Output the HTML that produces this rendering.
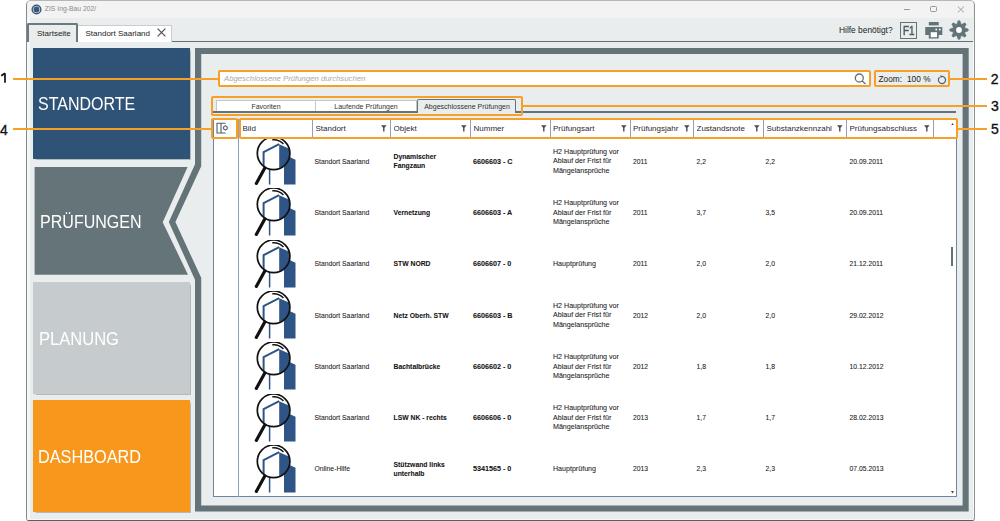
<!DOCTYPE html>
<html><head><meta charset="utf-8">
<style>
*{margin:0;padding:0;box-sizing:border-box}
html,body{width:1000px;height:521px;overflow:hidden;background:#fff;font-family:"Liberation Sans",sans-serif;color:#222}
.a{position:absolute}
#win{left:26px;top:0px;width:949px;height:521px;background:#e9eded;border:1px solid #b4b6b7;border-left-color:#838a8b;border-right-color:#8f9495;border-bottom-color:#5a6064;border-radius:5px 5px 3px 3px;overflow:hidden}
#title{left:0;top:0;width:946px;height:17px;background:#f3f3f3}
.t{white-space:nowrap;line-height:1}
.side{left:32.6px;width:157px;color:#fff;font-size:17.5px;line-height:1;box-shadow:0.6px 0.8px 0.8px rgba(0,0,0,0.22)}
.side span{position:absolute;left:6px;transform-origin:0 0;white-space:nowrap}
.hd{top:120px;height:17px;font-size:8px;color:#2a2a2a;line-height:17px;white-space:nowrap;overflow:hidden}
.sep{width:1px;background:#8ea2bd}
.flt{width:6px;height:7px}
.cell{font-size:6.8px;color:#1a1a1a;white-space:nowrap;line-height:9.5px;-webkit-text-stroke:0.07px #1a1a1a}
.n{font-size:7.2px}
.h2{font-size:7.1px;line-height:9.6px}
.b{font-weight:bold;color:#111}
.or{border:2px solid #f7a027;border-radius:2px}
.ln{background:#f7a027;height:2px}
.num{font-size:14px;color:#111;line-height:1;-webkit-text-stroke:0.35px #111}
</style></head><body>

<div id="win" class="a">
  <div id="title" class="a"></div>
  <div class="a" style="left:0;top:17px;width:2.5px;height:502px;background:#f6f8f8"></div>
  <div class="a" style="left:0;top:517.5px;width:947px;height:1.5px;background:#f6f8f8"></div>
  <div class="a" style="left:945.5px;top:41px;width:1.5px;height:476px;background:#f6f8f8"></div>
</div>

<!-- title bar content -->
<svg class="a" style="left:31px;top:4px" width="11" height="11" viewBox="0 0 11 11">
  <circle cx="5.5" cy="5.5" r="5" fill="#3b5878"/>
  <circle cx="5.5" cy="5.5" r="3.6" fill="#dfe5ea"/>
  <circle cx="5.5" cy="5.5" r="2.9" fill="#3b5878"/>
</svg>
<div class="a t" style="left:44.8px;top:6.2px;font-size:6.8px;color:#8a8a8a">ZIS Ing-Bau 202/</div>
<!-- window buttons -->
<div class="a" style="left:904px;top:9px;width:6px;height:1px;background:#999"></div>
<div class="a" style="left:930px;top:5.5px;width:7px;height:6.5px;border:1px solid #999;border-radius:1.5px"></div>
<svg class="a" style="left:957px;top:5.5px" width="8" height="7" viewBox="0 0 8 7"><path d="M0.8,0.5 L7,6.5 M7,0.5 L0.8,6.5" stroke="#999" stroke-width="0.9"/></svg>

<!-- toolbar -->
<div class="a" style="left:76px;top:40.5px;width:897px;height:1.5px;background:#637378"></div>
<!-- tabs -->
<div class="a" style="left:76px;top:24.5px;width:96px;height:17px;background:#fff;border:1px solid #c9cdcf;border-left:1.5px solid #8a9598;border-bottom:none"></div>
<div class="a t" style="left:85.5px;top:29.8px;font-size:8px;color:#222">Standort Saarland</div>
<svg class="a" style="left:156.5px;top:28px" width="9" height="9" viewBox="0 0 9 9"><path d="M0.6,0.6 L8.4,8.4 M8.4,0.6 L0.6,8.4" stroke="#555" stroke-width="1.3"/></svg>
<div class="a" style="left:27px;top:22.5px;width:50.5px;height:19.5px;background:#e9eded;border:2px solid #6b7a7e;border-bottom:none;border-radius:2px 2px 0 0"></div>
<div class="a t" style="left:37px;top:29.8px;font-size:8px;color:#222">Startseite</div>

<div class="a t" style="left:839px;top:26.3px;font-size:8.4px;color:#222">Hilfe benötigt?</div>
<div class="a" style="left:899.8px;top:22px;width:17.2px;height:17px;border:1.8px solid #637378"></div>
<div class="a t" style="left:902.6px;top:24.6px;font-size:12px;color:#4f5d62;transform:scaleX(0.82);transform-origin:0 0;-webkit-text-stroke:0.5px #4f5d62">F1</div>
<!-- printer -->
<svg class="a" style="left:924px;top:21px" width="20" height="19" viewBox="0 0 20 19">
  <rect x="4.8" y="1" width="9.9" height="3.4" fill="#637378"/>
  <rect x="1.2" y="6" width="17.1" height="8" rx="0.5" fill="#637378"/>
  <rect x="4.8" y="10.4" width="9.9" height="7.1" fill="#637378"/>
  <rect x="6.7" y="11.2" width="6.3" height="5" fill="#fff"/>
  <circle cx="12.2" cy="8.5" r="0.9" fill="#fff"/>
  <circle cx="15.8" cy="8.5" r="0.9" fill="#fff"/>
</svg>
<!-- gear -->
<svg class="a" style="left:949px;top:20px" width="20" height="20" viewBox="-10 -10 20 20">
  <path d="M-1.95,-6.20 L-1.00,-9.20 L1.00,-9.20 L1.95,-6.20 L2.42,-5.84 L3.01,-5.76 L5.80,-7.21 L7.21,-5.80 L5.76,-3.01 L5.84,-2.42 L6.20,-1.95 L9.20,-1.00 L9.20,1.00 L6.20,1.95 L5.84,2.42 L5.76,3.01 L7.21,5.80 L5.80,7.21 L3.01,5.76 L2.42,5.84 L1.95,6.20 L1.00,9.20 L-1.00,9.20 L-1.95,6.20 L-2.42,5.84 L-3.01,5.76 L-5.80,7.21 L-7.21,5.80 L-5.76,3.01 L-5.84,2.42 L-6.20,1.95 L-9.20,1.00 L-9.20,-1.00 L-6.20,-1.95 L-5.84,-2.42 L-5.76,-3.01 L-7.21,-5.80 L-5.80,-7.21 L-3.01,-5.76 L-2.42,-5.84 Z" fill="#637378" stroke="#637378" stroke-width="0.5" stroke-linejoin="round"/>
  <circle r="2.9" fill="#fff"/>
</svg>

<!-- sidebar -->
<div class="a side" style="top:48px;height:111px;background:#2f5277"><span style="left:5.6px;top:47.8px;transform:scaleX(0.915)">STANDORTE</span></div>
<svg class="a" style="left:33px;top:167px" width="160" height="108" viewBox="0 0 160 108">
  <polygon points="1.6,0 154.6,0 129.7,55.2 155,107.7 1.6,107.7" fill="#657479"/>
</svg>
<div class="a side" style="top:167px;height:108px;background:transparent;box-shadow:none"><span style="left:7.4px;top:46.5px;transform:scaleX(0.917)">PRÜFUNGEN</span></div>
<div class="a side" style="top:282px;height:112px;background:#c6cccd"><span style="left:6.4px;top:48.8px;transform:scaleX(0.945)">PLANUNG</span></div>
<div class="a side" style="top:400px;height:112px;background:#f7981d"><span style="left:5.9px;top:48.5px;transform:scaleX(0.93)">DASHBOARD</span></div>

<!-- dark frame -->
<svg class="a" style="left:0;top:0" width="1000" height="521">
  <path fill-rule="evenodd" fill="#637378" d="M195,48 V164.3 L168.8,222 L195,279.7 V511.5 H968.7 V48 Z M201.2,54 V166.2 L175.4,222 L201.2,277.8 V505.5 H962.6 V54 Z"/>
</svg>

<!-- search -->
<div class="a" style="left:219px;top:71.5px;width:651px;height:14.5px;background:#fff"></div>
<div class="a t" style="left:224px;top:75px;font-size:7.75px;font-style:italic;color:#a9a9a9">Abgeschlossene Prüfungen durchsuchen</div>
<svg class="a" style="left:854px;top:73px" width="13" height="12" viewBox="0 0 13 12"><circle cx="5.3" cy="5" r="4" fill="none" stroke="#637378" stroke-width="1.3"/><path d="M8.2,8 L11.5,11" stroke="#637378" stroke-width="1.4"/></svg>
<div class="a t" style="left:878.5px;top:75.2px;font-size:8.3px;color:#222">Zoom:</div><div class="a t" style="left:907px;top:75.2px;font-size:8.3px;color:#222">100 %</div>
<svg class="a" style="left:936px;top:74px" width="11" height="11" viewBox="0 0 11 11"><path d="M3.6,3.3 A3.6,3.6 0 1 0 5.9,2.4" fill="none" stroke="#55656a" stroke-width="1.25"/><path d="M4.4,0.9 L7,2.4 L4.6,4.1 Z" fill="#55656a"/></svg>

<!-- tabs 3 -->
<div class="a" style="left:213px;top:111.2px;width:743px;height:1.6px;background:#637378"></div>
<div class="a" style="left:216px;top:100px;width:100px;height:11.2px;background:#fff;border:1px solid #c3c7c9;border-bottom:none"></div>
<div class="a t" style="left:216px;top:102.5px;width:100px;text-align:center;font-size:7px;color:#333">Favoriten</div>
<div class="a" style="left:315px;top:100px;width:102px;height:11.2px;background:#fff;border:1px solid #c3c7c9;border-bottom:none"></div>
<div class="a t" style="left:315px;top:102.5px;width:102px;text-align:center;font-size:7px;color:#333">Laufende Prüfungen</div>
<div class="a" style="left:416.8px;top:99px;width:99.5px;height:14px;background:#e9eded;border:1.8px solid #637378;border-bottom:none;border-radius:2px 2px 0 0"></div>
<div class="a t" style="left:417px;top:102.5px;width:100px;text-align:center;font-size:7px;color:#333">Abgeschlossene Prüfungen</div>

<!-- table -->
<div class="a" style="left:213px;top:119px;width:744px;height:378px;background:#fff;border:1px solid #6f86a3"></div>
<div class="a" style="left:213px;top:136.5px;width:744px;height:1px;background:#8ea2bd"></div>
<div class="a sep" style="left:238px;top:119px;height:378px"></div>

<div class="a hd" style="left:242.5px;width:69px">Bild</div>
<div class="a sep" style="left:312px;top:120px;height:16.5px"></div>
<div class="a hd" style="left:315.5px;width:62px">Standort</div>
<svg class="a" style="left:381px;top:124.5px" width="6" height="7" viewBox="0 0 6 7"><path d="M0,0.3 H5.6 L3.5,2.8 V6.6 H2.1 V2.8 Z" fill="#4a4a4a"/></svg>
<div class="a sep" style="left:390px;top:120px;height:16.5px"></div>
<div class="a hd" style="left:393.5px;width:64px">Objekt</div>
<svg class="a" style="left:461px;top:124.5px" width="6" height="7" viewBox="0 0 6 7"><path d="M0,0.3 H5.6 L3.5,2.8 V6.6 H2.1 V2.8 Z" fill="#4a4a4a"/></svg>
<div class="a sep" style="left:470px;top:120px;height:16.5px"></div>
<div class="a hd" style="left:473.5px;width:63.5px">Nummer</div>
<svg class="a" style="left:540.5px;top:124.5px" width="6" height="7" viewBox="0 0 6 7"><path d="M0,0.3 H5.6 L3.5,2.8 V6.6 H2.1 V2.8 Z" fill="#4a4a4a"/></svg>
<div class="a sep" style="left:549.5px;top:120px;height:16.5px"></div>
<div class="a hd" style="left:553.0px;width:64.0px">Prüfungsart</div>
<svg class="a" style="left:620.5px;top:124.5px" width="6" height="7" viewBox="0 0 6 7"><path d="M0,0.3 H5.6 L3.5,2.8 V6.6 H2.1 V2.8 Z" fill="#4a4a4a"/></svg>
<div class="a sep" style="left:629.5px;top:120px;height:16.5px"></div>
<div class="a hd" style="left:633.0px;width:46.0px">Prüfungsjahr</div>
<svg class="a" style="left:684px;top:124.5px" width="6" height="7" viewBox="0 0 6 7"><path d="M0,0.3 H5.6 L3.5,2.8 V6.6 H2.1 V2.8 Z" fill="#4a4a4a"/></svg>
<div class="a sep" style="left:693px;top:120px;height:16.5px"></div>
<div class="a hd" style="left:696.5px;width:54px">Zustandsnote</div>
<svg class="a" style="left:754px;top:124.5px" width="6" height="7" viewBox="0 0 6 7"><path d="M0,0.3 H5.6 L3.5,2.8 V6.6 H2.1 V2.8 Z" fill="#4a4a4a"/></svg>
<div class="a sep" style="left:763px;top:120px;height:16.5px"></div>
<div class="a hd" style="left:766.5px;width:67px">Substanzkennzahl</div>
<svg class="a" style="left:837px;top:124.5px" width="6" height="7" viewBox="0 0 6 7"><path d="M0,0.3 H5.6 L3.5,2.8 V6.6 H2.1 V2.8 Z" fill="#4a4a4a"/></svg>
<div class="a sep" style="left:846px;top:120px;height:16.5px"></div>
<div class="a hd" style="left:849.5px;width:70.5px">Prüfungsabschluss</div>
<svg class="a" style="left:923.5px;top:124.5px" width="6" height="7" viewBox="0 0 6 7"><path d="M0,0.3 H5.6 L3.5,2.8 V6.6 H2.1 V2.8 Z" fill="#4a4a4a"/></svg>
<div class="a sep" style="left:932.5px;top:120px;height:16.5px"></div>
<svg class="a" style="left:216px;top:121.5px" width="13" height="12" viewBox="0 0 13 12"><path d="M1,0.8 V11.4 M0.5,1.2 H9.6 M0.5,11 H9.6 M5,1.2 V11" stroke="#4f5e64" stroke-width="1.1" fill="none"/><circle cx="9.4" cy="5.9" r="1.9" fill="#fff" stroke="#4f5e64" stroke-width="1.1"/><path d="M9.4,3.2 V3.9 M9.4,7.9 V8.6 M6.7,5.9 H7.4 M11.4,5.9 H12.1" stroke="#4f5e64" stroke-width="0.9"/></svg>
<svg class="a" style="left:950.8px;top:122.6px" width="3" height="2.4" viewBox="0 0 3 2.4"><path d="M0,2.4 L1.5,0 L3,2.4Z" fill="#444"/></svg>
<svg class="a" style="left:950.8px;top:491.2px" width="3" height="2.4" viewBox="0 0 3 2.4"><path d="M0,0 L1.5,2.4 L3,0Z" fill="#444"/></svg>
<div class="a" style="left:951px;top:247px;width:2px;height:19px;background:#637378"></div>
<svg width="0" height="0" style="position:absolute"><defs>
<clipPath id="lens"><circle cx="23.6" cy="16.3" r="16"/></clipPath>
<mask id="nolens"><rect x="-5" y="-5" width="60" height="60" fill="#fff"/><circle cx="23.6" cy="16.3" r="16.4" fill="#000"/></mask>
<symbol id="ico" viewBox="0 0 50 50" overflow="visible">
<g mask="url(#nolens)">
 <polygon points="34,17.5 45.5,22.7 45.5,47.4 34,47.4" fill="#2e5585"/>
 <path d="M19.6,47.4 V24 L34,17.5" fill="none" stroke="#2e5585" stroke-width="1.5"/>
</g>
<g clip-path="url(#lens)">
 <polygon points="29.2,7.2 46,14.8 46,40 29.2,40" fill="#2e5585"/>
 <path d="M13.6,40 V15.2 L29.2,7.2" fill="none" stroke="#2e5585" stroke-width="2"/>
</g>
<circle cx="23.6" cy="16.3" r="16.3" fill="none" stroke="#111" stroke-width="1.7"/>
<path d="M22.19,2.87 A13.5,13.5 0 0 1 33.47,7.09" fill="none" stroke="#111" stroke-width="1.4"/>
<path d="M14.8,31 L6.3,46.4" stroke="#111" stroke-width="3.2" stroke-linecap="round"/>
</symbol></defs></svg>
<svg class="a" style="left:250px;top:137.00px" width="50" height="50"><use href="#ico"/></svg>
<div class="a cell" style="left:314.5px;top:156.65px">Standort Saarland</div>
<div class="a cell b" style="left:393.5px;top:151.90px">Dynamischer<br>Fangzaun</div>
<div class="a cell b n" style="left:473px;top:156.65px">6606603 - C</div>
<div class="a cell h2" style="left:553px;top:147.80px">H2 Hauptprüfung vor<br>Ablauf der Frist für<br>Mängelansprüche</div>
<div class="a cell" style="left:633px;top:156.65px">2011</div>
<div class="a cell" style="left:696.5px;top:156.65px">2,2</div>
<div class="a cell" style="left:765.5px;top:156.65px">2,2</div>
<div class="a cell" style="left:849.5px;top:156.65px">20.09.2011</div>
<svg class="a" style="left:250px;top:188.30px" width="50" height="50"><use href="#ico"/></svg>
<div class="a cell" style="left:314.5px;top:207.95px">Standort Saarland</div>
<div class="a cell b" style="left:393.5px;top:207.95px">Vernetzung</div>
<div class="a cell b n" style="left:473px;top:207.95px">6606603 - A</div>
<div class="a cell h2" style="left:553px;top:199.10px">H2 Hauptprüfung vor<br>Ablauf der Frist für<br>Mängelansprüche</div>
<div class="a cell" style="left:633px;top:207.95px">2011</div>
<div class="a cell" style="left:696.5px;top:207.95px">3,7</div>
<div class="a cell" style="left:765.5px;top:207.95px">3,5</div>
<div class="a cell" style="left:849.5px;top:207.95px">20.09.2011</div>
<svg class="a" style="left:250px;top:239.60px" width="50" height="50"><use href="#ico"/></svg>
<div class="a cell" style="left:314.5px;top:259.25px">Standort Saarland</div>
<div class="a cell b" style="left:393.5px;top:259.25px">STW NORD</div>
<div class="a cell b n" style="left:473px;top:259.25px">6606607 - 0</div>
<div class="a cell h2" style="left:553px;top:260.00px">Hauptprüfung</div>
<div class="a cell" style="left:633px;top:259.25px">2011</div>
<div class="a cell" style="left:696.5px;top:259.25px">2,0</div>
<div class="a cell" style="left:765.5px;top:259.25px">2,0</div>
<div class="a cell" style="left:849.5px;top:259.25px">21.12.2011</div>
<svg class="a" style="left:250px;top:290.90px" width="50" height="50"><use href="#ico"/></svg>
<div class="a cell" style="left:314.5px;top:310.55px">Standort Saarland</div>
<div class="a cell b" style="left:393.5px;top:310.55px">Netz Oberh. STW</div>
<div class="a cell b n" style="left:473px;top:310.55px">6606603 - B</div>
<div class="a cell h2" style="left:553px;top:301.70px">H2 Hauptprüfung vor<br>Ablauf der Frist für<br>Mängelansprüche</div>
<div class="a cell" style="left:633px;top:310.55px">2012</div>
<div class="a cell" style="left:696.5px;top:310.55px">2,0</div>
<div class="a cell" style="left:765.5px;top:310.55px">2,0</div>
<div class="a cell" style="left:849.5px;top:310.55px">29.02.2012</div>
<svg class="a" style="left:250px;top:342.20px" width="50" height="50"><use href="#ico"/></svg>
<div class="a cell" style="left:314.5px;top:361.85px">Standort Saarland</div>
<div class="a cell b" style="left:393.5px;top:361.85px">Bachtalbrücke</div>
<div class="a cell b n" style="left:473px;top:361.85px">6606602 - 0</div>
<div class="a cell h2" style="left:553px;top:353.00px">H2 Hauptprüfung vor<br>Ablauf der Frist für<br>Mängelansprüche</div>
<div class="a cell" style="left:633px;top:361.85px">2012</div>
<div class="a cell" style="left:696.5px;top:361.85px">1,8</div>
<div class="a cell" style="left:765.5px;top:361.85px">1,8</div>
<div class="a cell" style="left:849.5px;top:361.85px">10.12.2012</div>
<svg class="a" style="left:250px;top:393.50px" width="50" height="50"><use href="#ico"/></svg>
<div class="a cell" style="left:314.5px;top:413.15px">Standort Saarland</div>
<div class="a cell b" style="left:393.5px;top:413.15px">LSW NK - rechts</div>
<div class="a cell b n" style="left:473px;top:413.15px">6606606 - 0</div>
<div class="a cell h2" style="left:553px;top:404.30px">H2 Hauptprüfung vor<br>Ablauf der Frist für<br>Mängelansprüche</div>
<div class="a cell" style="left:633px;top:413.15px">2013</div>
<div class="a cell" style="left:696.5px;top:413.15px">1,7</div>
<div class="a cell" style="left:765.5px;top:413.15px">1,7</div>
<div class="a cell" style="left:849.5px;top:413.15px">28.02.2013</div>
<svg class="a" style="left:250px;top:444.80px" width="50" height="50"><use href="#ico"/></svg>
<div class="a cell" style="left:314.5px;top:464.45px">Online-Hilfe</div>
<div class="a cell b" style="left:393.5px;top:459.70px">Stützwand links<br>unterhalb</div>
<div class="a cell b n" style="left:473px;top:464.45px">5341565 - 0</div>
<div class="a cell h2" style="left:553px;top:465.20px">Hauptprüfung</div>
<div class="a cell" style="left:633px;top:464.45px">2013</div>
<div class="a cell" style="left:696.5px;top:464.45px">2,3</div>
<div class="a cell" style="left:765.5px;top:464.45px">2,3</div>
<div class="a cell" style="left:849.5px;top:464.45px">07.05.2013</div>
<div class="a ln" style="left:13px;top:78px;width:206px"></div><svg class="a" style="left:0;top:72px" width="8" height="12" viewBox="0 0 8 12"><path d="M5,1.2 V10.8 M5,1.2 L1.2,3.8" stroke="#111" stroke-width="1.7" fill="none"/></svg>
<div class="a ln" style="left:13px;top:128px;width:199px"></div><div class="a t num" style="left:0px;top:123px">4</div>
<div class="a ln" style="left:949px;top:77.5px;width:38px"></div><div class="a t num" style="left:990.8px;top:72px">2</div>
<div class="a ln" style="left:522px;top:105px;width:465px"></div><div class="a t num" style="left:991px;top:99px">3</div>
<div class="a ln" style="left:957px;top:127.6px;width:30px"></div><div class="a t num" style="left:991px;top:121.6px">5</div>
<div class="a or" style="left:218px;top:70px;width:653px;height:17px"></div>
<div class="a or" style="left:873.5px;top:70px;width:76.5px;height:17px"></div>
<div class="a or" style="left:211px;top:96px;width:312px;height:19.5px"></div>
<div class="a or" style="left:211.3px;top:118px;width:26.4px;height:20.6px;border-width:2.2px"></div>
<div class="a or" style="left:239px;top:118px;width:718.5px;height:20.6px"></div>

</body></html>
